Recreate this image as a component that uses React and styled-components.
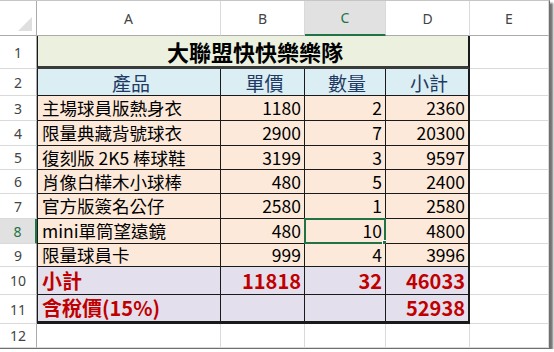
import React from 'react';
import styled, { createGlobalStyle } from 'styled-components';

const GlobalStyle = createGlobalStyle`
  html, body {
    margin: 0;
    padding: 0;
    background: #fff;
  }
  body {
    font-family: "Noto Sans CJK TC", "Noto Sans", sans-serif;
  }
`;

const GREEN = '#217346';
const INK = '#1a1a1a';
const GRID = '1px solid #dadada';

const fills = {
  title: '#ebf1de',
  head: '#daeef3',
  item: '#fde9d9',
  total: '#e4dfec',
};

const Sheet = styled.div`
  display: grid;
  grid-template-columns: 37px 184px 84px 81px 84px 79px;
  grid-template-rows: 35px 33px 27px 25px 25px 24px 24px 25px 25px 23px 28px 29px 24px;
  width: 549px;
  border-top: 1px solid #c6c6c6;
  border-right: 1px solid #6f6f6f;
  border-bottom: 1px solid #6f6f6f;
  box-shadow: 3px 3px 2px rgba(0, 0, 0, 0.55);
  background: #fff;
`;

const Corner = styled.div`
  box-sizing: border-box;
  display: flex;
  align-items: flex-end;
  justify-content: flex-end;
  padding: 0 4px 4px 0;
  border-right: 1px solid #ababab;
  border-bottom: 1px solid #ababab;
`;

const Triangle = styled.div`
  width: 0;
  height: 0;
  border-left: 14px solid transparent;
  border-bottom: 14px solid #dfdfdf;
`;

const ColHead = styled.div`
  box-sizing: border-box;
  display: flex;
  align-items: center;
  justify-content: center;
  font-family: "Noto Sans", "Open Sans", sans-serif;
  font-size: 14px;
  color: ${p => (p.$active ? GREEN : '#444')};
  background: ${p => (p.$active ? '#e1e1e1' : '#fff')};
  border-right: 1px solid #dadada;
  border-bottom: ${p => (p.$active ? `2px solid ${GREEN}` : '1px solid #ababab')};
`;

const RowHead = styled.div`
  box-sizing: border-box;
  display: flex;
  align-items: center;
  justify-content: center;
  font-family: "Noto Sans", "Open Sans", sans-serif;
  font-size: 14px;
  color: ${p => (p.$active ? GREEN : '#444')};
  background: ${p => (p.$active ? '#e1e1e1' : '#fff')};
  border-right: ${p => (p.$active ? `2px solid ${GREEN}` : '1px solid #ababab')};
  border-bottom: 1px solid #dadada;
`;

const Cell = styled.div`
  box-sizing: border-box;
  position: relative;
  display: flex;
  align-items: center;
  justify-content: ${p =>
    p.$align === 'right' ? 'flex-end' : p.$align === 'center' ? 'center' : 'flex-start'};
  grid-column: span ${p => p.$span || 1};
  padding: ${p => (p.$align === 'right' ? '0 3px 0 0' : '0 0 0 4px')};
  white-space: nowrap;
  line-height: 1;
  background: ${p => fills[p.$fill] || '#fff'};
  color: ${p => p.$color || '#000'};
  font-size: ${p => p.$size || 17.5}px;
  font-weight: ${p => (p.$bold ? 700 : 400)};
  border-left: ${p => (p.$first ? `1px solid ${INK}` : 'none')};
  border-right: ${p => p.$right || (p.$fill ? `1px solid ${INK}` : GRID)};
  border-bottom: ${p => p.$bottom || (p.$fill ? `1px solid ${INK}` : GRID)};
`;

const Selection = styled.div`
  position: absolute;
  inset: -1px -1px -1px -1px;
  border: 2px solid ${GREEN};
  pointer-events: none;
`;

const Handle = styled.div`
  position: absolute;
  right: -5px;
  bottom: -5px;
  width: 5px;
  height: 5px;
  background: ${GREEN};
  border: 1px solid #fff;
`;

const items = [
  ['主場球員版熱身衣', 1180, 2],
  ['限量典藏背號球衣', 2900, 7],
  ['復刻版 2K5 棒球鞋', 3199, 3],
  ['肖像白樺木小球棒', 480, 5],
  ['官方版簽名公仔', 2580, 1],
  ['mini單筒望遠鏡', 480, 10],
  ['限量球員卡', 999, 4],
];

const RED = '#c00000';
const NAVY = '#1f3a64';
const THICK_R = `2px solid ${INK}`;

export default function App() {
  const priceSum = items.reduce((s, it) => s + it[1], 0);
  const qtySum = items.reduce((s, it) => s + it[2], 0);
  const total = items.reduce((s, it) => s + it[1] * it[2], 0);
  const taxed = Math.round(total * 1.15);

  return (
    <>
      <GlobalStyle />
      <Sheet>
        <Corner>
          <Triangle />
        </Corner>
        {['A', 'B', 'C', 'D', 'E'].map(c => (
          <ColHead key={c} $active={c === 'C'}>
            {c}
          </ColHead>
        ))}

        <RowHead>1</RowHead>
        <Cell $span={4} $fill="title" $first $align="center" $size={22} $bold
          $right={THICK_R} $bottom="3px solid #3a3a3a">
          大聯盟快快樂樂隊
        </Cell>
        <Cell />

        <RowHead>2</RowHead>
        {['產品', '單價', '數量', '小計'].map((h, i) => (
          <Cell key={h} $fill="head" $first={i === 0} $align="center" $size={19}
            $color={NAVY} $right={i === 3 ? THICK_R : undefined}>
            {h}
          </Cell>
        ))}
        <Cell />

        {items.map(([name, price, qty], i) => {
          const row = i + 3;
          return (
            <React.Fragment key={name}>
              <RowHead $active={row === 8}>{row}</RowHead>
              <Cell $fill="item" $first>{name}</Cell>
              <Cell $fill="item" $align="right">{price}</Cell>
              <Cell $fill="item" $align="right">
                {qty}
                {row === 8 && (
                  <Selection>
                    <Handle />
                  </Selection>
                )}
              </Cell>
              <Cell $fill="item" $align="right" $right={THICK_R}>{price * qty}</Cell>
              <Cell />
            </React.Fragment>
          );
        })}

        <RowHead>10</RowHead>
        <Cell $fill="total" $first $bold $size={20} $color={RED}>小計</Cell>
        <Cell $fill="total" $align="right" $bold $size={20} $color={RED}>{priceSum}</Cell>
        <Cell $fill="total" $align="right" $bold $size={20} $color={RED}>{qtySum}</Cell>
        <Cell $fill="total" $align="right" $bold $size={20} $color={RED} $right={THICK_R}>{total}</Cell>
        <Cell />

        <RowHead>11</RowHead>
        <Cell $fill="total" $first $bold $size={20} $color={RED} $bottom={`3px solid ${INK}`}>含稅價(15%)</Cell>
        <Cell $fill="total" $bottom={`3px solid ${INK}`} />
        <Cell $fill="total" $bottom={`3px solid ${INK}`} />
        <Cell $fill="total" $align="right" $bold $size={20} $color={RED} $right={THICK_R}
          $bottom={`3px solid ${INK}`}>
          {taxed}
        </Cell>
        <Cell />

        <RowHead>12</RowHead>
        <Cell />
        <Cell />
        <Cell />
        <Cell />
        <Cell />
      </Sheet>
    </>
  );
}
